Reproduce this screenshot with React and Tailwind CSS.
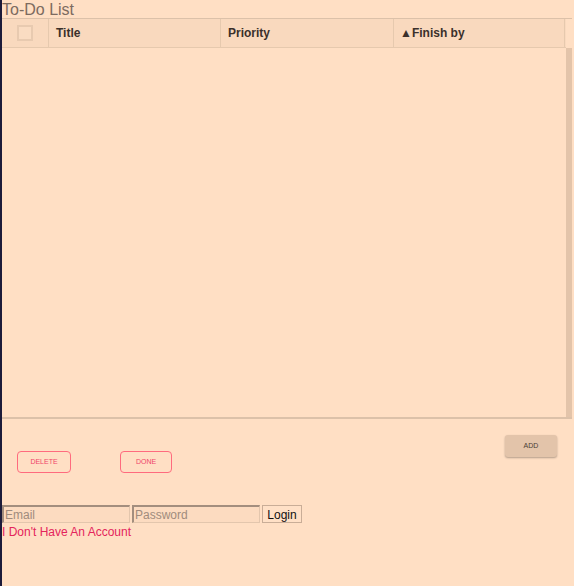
import React from "react";

const font = { fontFamily: '"Liberation Sans", Arial, sans-serif' };

const App = () => {
  return (
    <div className="flex w-[574px] h-[586px] bg-[#ffdfc4]" style={font}>
      <div className="w-[2px] bg-[#1c1b3a] shrink-0" />
      <div className="flex-1 flex flex-col">
        <h1 className="text-[16px] leading-[18px] pt-[1px] text-[#7d6b5f] font-normal h-[18px]">To-Do List</h1>

        <div className="flex w-[570px] h-[401px] border-t border-b-2 border-[#dcc1a9]">
          <div className="flex-1 flex flex-col">
            <div className="flex h-[29px] bg-[#f9d9be] border-b border-[#e6c9ae] text-[12px] font-bold text-[#3b302b]">
              <div className="w-[47px] flex items-center justify-center border-r border-[#e6c9ae]">
                <div className="w-[16px] h-[16px] border-2 border-[#e8cab0] bg-[#fadcc2]" />
              </div>
              <div className="w-[172px] flex items-center pl-[7px] border-r border-[#e6c9ae]">Title</div>
              <div className="w-[173px] flex items-center pl-[7px] border-r border-[#e6c9ae]">Priority</div>
              <div className="w-[171px] flex items-center pl-[6px] border-r border-[#e6c9ae]">
                <span className="text-[12px]">▲</span>Finish by
              </div>
            </div>
            <div className="flex-1" />
          </div>
          <div className="w-[6px] flex flex-col">
            <div className="h-[29px]" />
            <div className="flex-1 bg-[#e3c4aa]" />
          </div>
        </div>

        <div className="flex justify-between items-start w-[570px]">
          <div className="flex gap-[49px] pl-[15px] pt-[32px]">
            <button className="w-[54px] h-[22px] border border-[#ff6b7e] rounded-[4px] text-[7px] text-[#f0446a]">DELETE</button>
            <button className="w-[52px] h-[22px] border border-[#ff6b7e] rounded-[4px] text-[7px] text-[#f0446a]">DONE</button>
          </div>
          <button className="mt-[16px] mr-[15px] w-[52px] h-[22px] bg-[#e3c4aa] rounded-[3px] shadow-[0_1px_2px_rgba(0,0,0,0.3)] text-[7px] text-[#4a3e36]">ADD</button>
        </div>

        <div className="flex mt-[32px] gap-[2px] items-center">
          <input placeholder="Email" className="w-[128px] h-[18px] bg-[#fcdbc0] border-t-2 border-l-2 border-[#a38e7e] border-b border-r border-b-[#e3c6ad] border-r-[#e3c6ad] text-[12px] px-[1px] placeholder:text-[#a08b7d] outline-none" />
          <input placeholder="Password" className="w-[128px] h-[18px] bg-[#fcdbc0] border-t-2 border-l-2 border-[#a38e7e] border-b border-r border-b-[#e3c6ad] border-r-[#e3c6ad] text-[12px] px-[1px] placeholder:text-[#a08b7d] outline-none" />
          <button className="w-[40px] h-[18px] border border-[#c9ad97] bg-[#ffe0c6] text-[12px] text-[#111]">Login</button>
        </div>
        <a className="text-[12px] leading-[14px] mt-[2px] text-[#e4245c]">I Don't Have An Account</a>
      </div>
      <div className="w-[2px] shrink-0 bg-[#ffdfc4]" />
    </div>
  );
};

export default App;
